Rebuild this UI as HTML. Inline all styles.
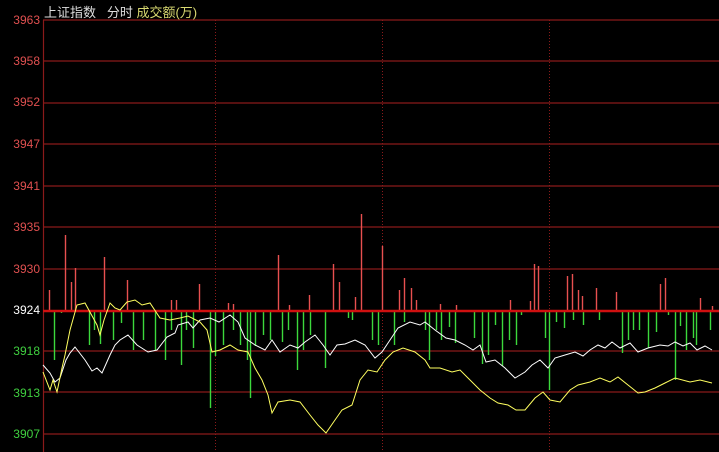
<!DOCTYPE html><html><head><style>
body{margin:0;background:#000;width:719px;height:452px;overflow:hidden;font-family:"Liberation Sans","Noto Sans CJK SC",sans-serif}
.t{position:absolute;top:2px;font-size:13px;color:#ddd;left:44px}
.l{position:absolute;left:0;width:40px;text-align:right;font-size:12px}
</style></head><body>
<div class="t">上证指数&nbsp;&nbsp;&nbsp;分时 <span style="color:#d8d870">成交额(万)</span></div>
<div class="l" style="top:13px;color:#e05050">3963</div>
<div class="l" style="top:54px;color:#e05050">3958</div>
<div class="l" style="top:95px;color:#e05050">3952</div>
<div class="l" style="top:137px;color:#e05050">3947</div>
<div class="l" style="top:179px;color:#e05050">3941</div>
<div class="l" style="top:220px;color:#e05050">3935</div>
<div class="l" style="top:262px;color:#e05050">3930</div>
<div class="l" style="top:303px;color:#fff">3924</div>
<div class="l" style="top:344px;color:#40d040">3918</div>
<div class="l" style="top:386px;color:#40d040">3913</div>
<div class="l" style="top:427px;color:#40d040">3907</div>
<svg width="719" height="452" style="position:absolute;left:0;top:0">
<g stroke="#8a1a1a" stroke-width="1.2">
<line x1="43" y1="20" x2="719" y2="20"/><line x1="43" y1="61" x2="719" y2="61"/><line x1="43" y1="103" x2="719" y2="103"/><line x1="43" y1="144" x2="719" y2="144"/><line x1="43" y1="186" x2="719" y2="186"/><line x1="43" y1="227" x2="719" y2="227"/><line x1="43" y1="269" x2="719" y2="269"/><line x1="43" y1="351" x2="719" y2="351"/><line x1="43" y1="392" x2="719" y2="392"/><line x1="43" y1="434" x2="719" y2="434"/>
<line x1="43.5" y1="20" x2="43.5" y2="452"/>
</g>
<g stroke="#8a1a1a" stroke-dasharray="1,2"><line x1="215.5" y1="20" x2="215.5" y2="452"/><line x1="382.5" y1="20" x2="382.5" y2="452"/><line x1="549.5" y1="20" x2="549.5" y2="452"/></g>
<g stroke="#e85050" stroke-width="1.4" id="r"></g>
<g stroke="#3cd83c" stroke-width="1.4" id="g"></g>
<line x1="43" y1="311" x2="719" y2="311" stroke="#d01010" stroke-width="2.5"/>
<polyline id="w" fill="none" stroke="#fff" stroke-width="1"/>
<polyline id="y" fill="none" stroke="#ffff60" stroke-width="1"/>
</svg>
<script>
var R=[[49,290],[65,235],[71,282],[75,268],[104,257],[127,280],[171,300],[176,300],[199,284],[228,303],[233,304],[278,255],[289,305],[309,295],[333,264],[339,282],[355,297],[361,214],[382,246],[399,290],[404,278],[411,288],[416,300],[440,304],[456,305],[510,300],[530,301],[534,264],[538,266],[567,276],[572,274],[578,290],[582,296],[596,288],[616,292],[660,284],[665,278],[700,298],[712,306]];
var G=[[54,360],[61,313],[89,345],[94,330],[100,344],[113,340],[121,323],[133,350],[143,340],[155,350],[165,360],[171,330],[181,365],[186,330],[193,348],[210,408],[215,356],[223,345],[233,330],[240,345],[247,360],[250,398],[255,346],[263,335],[270,340],[282,342],[288,330],[297,370],[303,350],[310,335],[325,368],[348,318],[352,320],[372,340],[378,345],[394,345],[404,322],[425,330],[429,360],[436,330],[441,340],[449,327],[455,343],[474,338],[482,364],[488,355],[495,325],[502,366],[509,340],[516,345],[521,315],[545,338],[549,390],[556,322],[564,328],[573,320],[583,325],[599,320],[622,353],[628,340],[633,330],[639,330],[648,348],[656,332],[668,315],[675,380],[680,326],[686,350],[693,338],[696,345],[710,330]];
var ns="http://www.w3.org/2000/svg";
function bars(a,id){var g=document.getElementById(id);a.forEach(function(p){var l=document.createElementNS(ns,"line");l.setAttribute("x1",p[0]+.5);l.setAttribute("x2",p[0]+.5);l.setAttribute("y1",311);l.setAttribute("y2",p[1]);g.appendChild(l);});}
bars(R,"r");bars(G,"g");
document.getElementById("w").setAttribute("points","43,365 50,373 55,382 60,378 66,360 70,353 75,347 85,360 92,371 97,368 102,373 110,355 115,345 120,340 128,335 137,345 148,352 157,350 167,337 175,333 178,325 188,322 193,328 200,320 210,318 219,322 230,315 238,322 245,338 255,345 265,350 272,340 280,352 290,345 298,348 305,342 315,335 323,345 330,355 337,345 345,344 355,340 365,345 375,358 382,352 390,340 398,328 410,322 420,325 425,322 435,330 446,338 455,340 465,345 473,350 480,345 486,362 495,360 505,368 515,378 525,372 532,365 540,360 548,368 555,358 565,355 575,352 583,356 590,350 598,345 605,348 612,342 620,348 630,343 638,352 648,348 660,345 668,346 675,342 683,346 690,343 697,350 705,346 712,350");
document.getElementById("y").setAttribute("points","43,372 50,390 53,380 57,392 62,368 65,355 70,330 77,305 85,303 97,325 100,335 104,320 110,303 115,308 120,310 127,302 135,300 142,305 150,303 160,318 170,320 180,318 188,316 200,322 207,330 212,352 220,350 230,345 238,350 248,352 255,368 262,380 268,395 272,413 278,402 290,400 300,402 310,415 318,425 326,433 335,420 342,410 352,405 360,380 368,370 377,372 385,360 393,352 403,348 415,352 425,360 430,368 440,368 452,372 460,370 470,380 480,390 490,398 498,403 508,405 516,410 525,410 535,398 543,392 550,400 560,402 570,390 578,385 590,382 600,378 610,382 618,377 628,385 638,393 645,392 655,388 665,383 675,378 690,382 700,380 712,383");
</script>
</body></html>
